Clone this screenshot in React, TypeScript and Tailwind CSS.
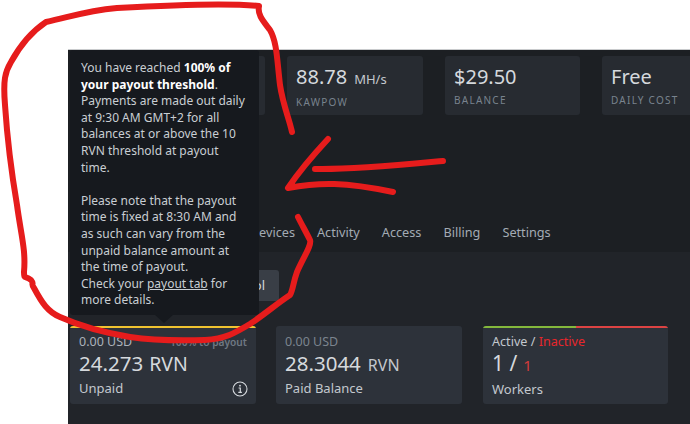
const font = { fontFamily: '"Noto Sans", "Open Sans", sans-serif' };

function Stat({ value, unit, label, w }: { value: string; unit?: string; label: string; w: string }) {
  return (
    <div className={`${w} h-[59px] shrink-0 rounded-[3px] bg-[#272b31] px-[9px] pt-[7px]`}>
      <div className="flex items-baseline gap-[7px] text-[20px] leading-[28px] text-[#d5d9dd]">
        {value}
        {unit && <span className="text-[13px] text-[#c3c8ce]">{unit}</span>}
      </div>
      <div className="pt-px text-[10px] leading-[16px] tracking-[1.25px] text-[#79838e]">{label}</div>
    </div>
  );
}

function Card({ children, bar, w = "w-[186px]" }: { children: React.ReactNode; bar?: React.ReactNode; w?: string }) {
  return (
    <div className={`relative h-[78px] ${w} shrink-0 overflow-hidden rounded-[3px] bg-[#2d323a] px-[9px] pt-[8px]`}>
      {bar}
      {children}
    </div>
  );
}

function Info() {
  return (
    <svg width="16" height="16" viewBox="0 0 16 16" fill="none" stroke="#d5d9dd" className="absolute right-[8px] bottom-[7px]">
      <circle cx="8" cy="8" r="7" strokeWidth="1.1" />
      <path d="M6.6 7h1.7v4.2M6.3 11.4h3.6" strokeWidth="1.2" />
      <circle cx="8" cy="4.7" r="0.9" fill="#d5d9dd" stroke="none" />
    </svg>
  );
}

export default function App() {
  return (
    <div className="relative h-[424px] w-[690px] overflow-hidden bg-white pt-[49px] pl-[68px]" style={font}>
      <div className="h-[375px] w-[622px] overflow-hidden border-t border-t-[#c9cbcd] bg-[#212429]">
        <div className="flex h-[202px] flex-col bg-[#1c1f23]">
          <div className="flex gap-[22px] pt-[6px] pl-[2px]">
            <Stat w="w-[195px]" value="" label="" />
            <Stat w="w-[136px]" value="88.78" unit="MH/s" label="KAWPOW" />
            <Stat w="w-[135px]" value="$29.50" label="BALANCE" />
            <Stat w="w-[136px]" value="Free" label="DAILY COST" />
          </div>
          <div className="mt-auto flex h-[40px] items-center gap-[22px] pt-[2px] pl-[151px] text-[12.7px] text-[#a3abb4]">
            <span className="w-[76px] text-right">Devices</span>
            <span>Activity</span>
            <span>Access</span>
            <span>Billing</span>
            <span>Settings</span>
          </div>
        </div>
        <div className="px-[2px] pt-[18px]">
          <div className="flex h-[31px] w-[209px] items-center justify-end rounded-[3px] bg-[#393e46] pr-[14px] text-[13px] text-[#d5d9dd]">
            Control
          </div>
          <div className="mt-[25px] flex gap-[20px]">
            <Card bar={<div className="absolute top-0 left-0 h-[2px] w-full bg-[#f0c330]" />}>
              <div className="flex items-center justify-between text-[12.5px] leading-[16px] text-[#aab1b9]">
                <span>0.00 USD</span>
                <span className="text-[10.2px] font-semibold text-[#6f7883]">100% to payout</span>
              </div>
              <div className="flex items-baseline gap-[6px] text-[20.5px] leading-[27px] text-[#d5d9dd]">
                24.273 <span className="text-[19.5px]">RVN</span>
              </div>
              <div className="text-[13px] leading-[22px] text-[#c3c8ce]">Unpaid</div>
              <Info />
            </Card>
            <Card>
              <div className="text-[12.5px] leading-[16px] text-[#7b848e]">0.00 USD</div>
              <div className="flex items-baseline gap-[7px] text-[20.5px] leading-[27px] text-[#d5d9dd]">
                28.3044 <span className="text-[16px] text-[#c3c8ce]">RVN</span>
              </div>
              <div className="-mt-[2px] text-[13px] leading-[22px] text-[#c3c8ce]">Paid Balance</div>
            </Card>
            <div className="ml-px">
              <Card
                w="w-[185px]"
                bar={
                  <div className="absolute top-0 left-0 flex h-[2px] w-full">
                    <div className="h-full w-1/2 bg-[#84b83c]" />
                    <div className="h-full w-1/2 bg-[#dc4343]" />
                  </div>
                }
              >
                <div className="text-[12.6px] leading-[16px] text-[#c3c8ce]">
                  Active / <span className="text-[#e8262b]">Inactive</span>
                </div>
                <div className="flex items-baseline gap-[6px] text-[21px] leading-[27px] text-[#d5d9dd]">
                  1 / <span className="text-[15px] text-[#d53a3a]">1</span>
                </div>
                <div className="-mt-px text-[13px] leading-[22px] text-[#c3c8ce]">Workers</div>
              </Card>
            </div>
          </div>
        </div>
      </div>

      {/* Tooltip */}
      <div className="absolute top-[50px] left-[70px] h-[265px] w-[189px] rounded-[3px] bg-[#16191e] px-[11px] pt-[10px] text-[12px] leading-[16.6px] text-[#c9ced3]">
        <div>
          You have reached <b className="font-bold text-white">100% of your payout threshold</b>. Payments are made out daily at 9:30 AM GMT+2 for all balances at or above the 10 RVN threshold at payout time.
        </div>
        <div className="mt-[16.6px]">
          Please note that the payout time is fixed at 8:30 AM and as such can vary from the unpaid balance amount at the time of payout.
        </div>
        <div>
          Check your <span className="underline">payout tab</span> for more details.
        </div>
        <div className="absolute top-full left-[85px] h-0 w-0 border-x-[9px] border-t-[8px] border-x-transparent border-t-[#16191e]" />
      </div>

      {/* Hand-drawn annotation */}
      <svg className="pointer-events-none absolute inset-0" width="690" height="424" fill="none" stroke="#e61c1c" strokeWidth="6" strokeLinecap="round" strokeLinejoin="round">
        <path d="M292 132 C289 118 283 105 280 85 C277 60 277 42 270 30 C264 22 257 15 259 6 C230 3 170 5 117 8 C85 11 70 17 46 22 C34 30 22 42 11 62 C5 72 3 80 5 105 C7 135 11 170 17 205 C21 235 26 250 24 272 C24 280 25 275 31 280 C35 285 30 282 34 288 C42 303 48 312 60 317 C80 326 100 332 130 337 C150 340 170 341 205 340 C225 339 235 333 250 324 C265 314 275 305 290 295 C293 290 293 283 297 272 C303 258 312 245 310 240 C306 232 302 225 298 217" />
        <path d="M328 139 C315 153 300 170 288 188 C320 182 345 182 393 192" />
        <path d="M315 169 C350 170 400 165 443 161" />
      </svg>
    </div>
  );
}
